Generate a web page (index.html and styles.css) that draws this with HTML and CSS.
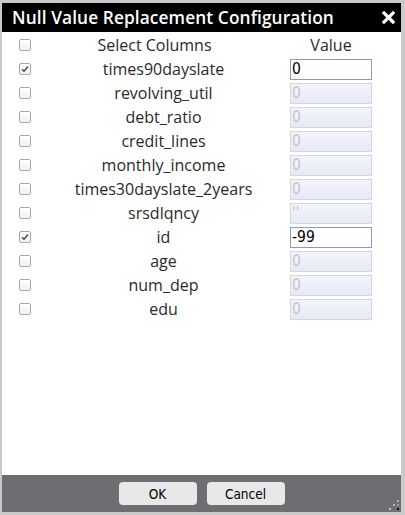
FILE: index.html
```html
<!DOCTYPE html>
<html>
<head>
<meta charset="utf-8">
<link rel="stylesheet" href="styles.css">
</head>
<body>
<div class="dialog">
  <div class="titlebar">
    <span class="title">Null Value Replacement Configuration</span>
    <svg class="close" width="13" height="13" viewBox="0 0 13 13"><path d="M2 2 L11 11 M11 2 L2 11" stroke="#fff" stroke-width="3.2" stroke-linecap="square"/></svg>
  </div>
  <div class="content">
    <div class="grid">
      <div class="cb-cell"><span class="cb"></span></div>
      <div class="label head-label">Select Columns</div>
      <div class="value-head">Value</div>

      <div class="cb-cell"><span class="cb checked"><svg width="8" height="8" viewBox="0 0 8 8"><path d="M1 4.2 L3 6.2 L7 1.5" fill="none" stroke="#444" stroke-width="1.4"/></svg></span></div>
      <div class="label">times90dayslate</div>
      <div class="val"><input class="inp" value="0"></div>

      <div class="cb-cell"><span class="cb"></span></div>
      <div class="label">revolving_util</div>
      <div class="val"><input class="inp" value="0" disabled></div>

      <div class="cb-cell"><span class="cb"></span></div>
      <div class="label">debt_ratio</div>
      <div class="val"><input class="inp" value="0" disabled></div>

      <div class="cb-cell"><span class="cb"></span></div>
      <div class="label">credit_lines</div>
      <div class="val"><input class="inp" value="0" disabled></div>

      <div class="cb-cell"><span class="cb"></span></div>
      <div class="label">monthly_income</div>
      <div class="val"><input class="inp" value="0" disabled></div>

      <div class="cb-cell"><span class="cb"></span></div>
      <div class="label">times30dayslate_2years</div>
      <div class="val"><input class="inp" value="0" disabled></div>

      <div class="cb-cell"><span class="cb"></span></div>
      <div class="label">srsdlqncy</div>
      <div class="val"><input class="inp" value="''" disabled></div>

      <div class="cb-cell"><span class="cb checked"><svg width="8" height="8" viewBox="0 0 8 8"><path d="M1 4.2 L3 6.2 L7 1.5" fill="none" stroke="#444" stroke-width="1.4"/></svg></span></div>
      <div class="label">id</div>
      <div class="val"><input class="inp" value="-99"></div>

      <div class="cb-cell"><span class="cb"></span></div>
      <div class="label">age</div>
      <div class="val"><input class="inp" value="0" disabled></div>

      <div class="cb-cell"><span class="cb"></span></div>
      <div class="label">num_dep</div>
      <div class="val"><input class="inp" value="0" disabled></div>

      <div class="cb-cell"><span class="cb"></span></div>
      <div class="label">edu</div>
      <div class="val"><input class="inp" value="0" disabled></div>
    </div>
  </div>
  <div class="footer">
    <button class="btn">OK</button>
    <button class="btn">Cancel</button>
    <svg class="grip" width="11" height="11" viewBox="0 0 11 11">
      <rect x="8" y="0" width="2" height="2" fill="#b0b0b0"/>
      <rect x="4" y="4" width="2" height="2" fill="#b0b0b0"/>
      <rect x="8" y="4" width="2" height="2" fill="#9a9a9a"/>
      <rect x="0" y="8" width="2" height="2" fill="#c8c8c8"/>
      <rect x="8" y="8" width="2" height="2" fill="#111"/>
    </svg>
  </div>
</div>
</body>
</html>
```

FILE: styles.css
```css
html, body {
  margin: 0;
  padding: 0;
}
body {
  background: #c9c9c9;
  width: 405px;
  height: 515px;
  overflow: hidden;
  padding: 3px 4px 3px 2px;
  box-sizing: border-box;
  font-family: "Open Sans", sans-serif;
}
.dialog {
  width: 399px;
  height: 509px;
  background: #fff;
  display: flex;
  flex-direction: column;
  position: relative;
}
.titlebar {
  height: 29px;
  background: #000;
  color: #fff;
  display: flex;
  align-items: center;
  justify-content: space-between;
  padding: 0 6px 0 10px;
  flex: none;
}
.title {
  font-size: 17.3px;
  font-weight: 600;
  letter-spacing: 0.1px;
}
.close {
  display: block;
  margin-top: -1px;
}
.content {
  flex: 1;
  padding-top: 1px;
}
.grid {
  display: grid;
  grid-template-columns: 43px 237px 119px;
  grid-auto-rows: 24px;
}
.cb-cell {
  display: flex;
  align-items: center;
  padding-left: 17px;
}
.cb {
  width: 12px;
  height: 12px;
  box-sizing: border-box;
  border: 1px solid #a8a8a8;
  border-radius: 2px;
  background: linear-gradient(#fff, #f0f0f0);
  display: flex;
  align-items: center;
  justify-content: center;
}
.cb svg {
  display: block;
}
.label {
  display: flex;
  align-items: center;
  justify-content: center;
  font-size: 16px;
  color: #2a2a2a;
  white-space: nowrap;
}
.head-label {
  padding-right: 18px;
}
.value-head {
  display: flex;
  align-items: center;
  justify-content: center;
  font-size: 16px;
  color: #2a2a2a;
  padding-right: 21px;
}
.val {
  display: flex;
  align-items: center;
  padding-left: 8px;
}
.inp {
  width: 82px;
  height: 21px;
  box-sizing: border-box;
  border: 1px solid #8c99b8;
  background: #fff;
  font-family: "DejaVu Sans Condensed", "DejaVu Sans", sans-serif;
  font-stretch: condensed;
  font-size: 15.5px;
  color: #000;
  padding: 0 0 0 1px;
  margin: 0;
  outline: none;
}
.inp:disabled {
  border-color: #d4d4e8;
  background: linear-gradient(#f4f5fb, #e6e9f5);
  color: #c4c4c4;
}
.footer {
  height: 37px;
  background: #6d6e71;
  flex: none;
  display: flex;
  align-items: center;
  justify-content: center;
  gap: 10px;
  box-sizing: border-box;
  position: relative;
}
.btn {
  width: 78px;
  height: 23px;
  border: none;
  border-radius: 4px;
  background: #e8e8e8;
  font-family: "DejaVu Sans Condensed", "DejaVu Sans", sans-serif;
  font-stretch: condensed;
  font-size: 13.5px;
  color: #000;
  padding: 0;
  margin: 0;
}
.grip {
  position: absolute;
  right: 1px;
  bottom: 1px;
}
```
